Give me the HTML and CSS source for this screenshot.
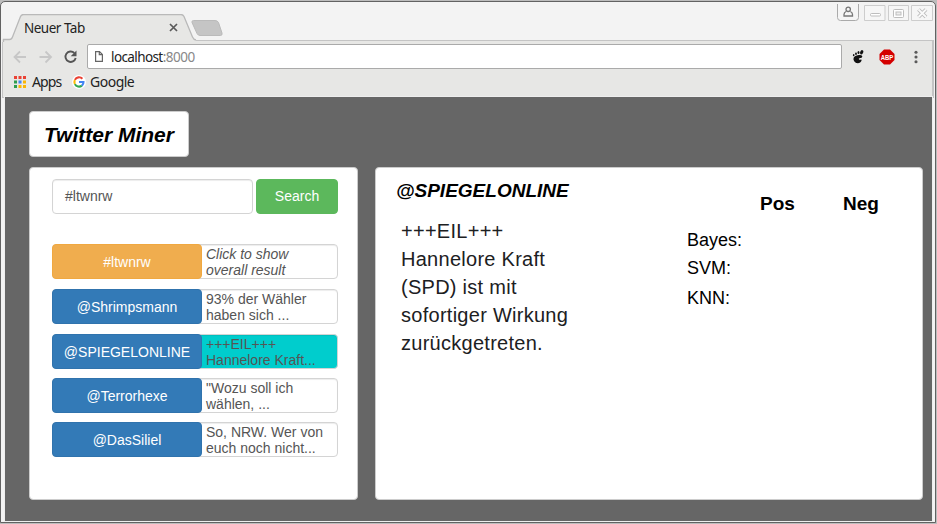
FILE: index.html
```html
<!DOCTYPE html>
<html lang="de">
<head>
<meta charset="utf-8">
<title>Twitter Miner</title>
<link rel="stylesheet" href="styles.css">
</head>
<body>
<div class="window">
  <header class="tabstrip">
    <svg class="tab-shape" width="240" height="28" viewBox="0 0 240 28">
      <path d="M0 28V25.500H7.500C9.500 25.500 10 24.500 10.500 23L18.500 2.500Q19.500 .5 21.500 .5H179Q181 .5 182 2.500L190.500 23Q191.500 25.500 194 25.500V28Z" fill="#e7e7e5"/>
      <path d="M1.500 28V25.500H7.500C9.500 25.500 10 24.500 10.500 23L18.500 2.500Q19.500 .5 21.500 .5H179Q181 .5 182 2.500L190.500 23Q191.500 25.500 194 26" fill="none" stroke="#b9b9b9" stroke-width="1.300"/>
      <path d="M191.500 6.500H213Q215.500 6.500 216.500 8.500L220 19Q220.500 21.500 218.500 21.500H198Q196 21.500 195 19.500L190 8.500Q189.500 6.500 191.500 6.500Z" fill="#c5c5c5" stroke="#bababa"/>
    </svg>
    <div class="tab">
      <span class="tab-title">Neuer Tab</span>
      <svg width="9" height="9" viewBox="0 0 9 9"><path d="M1 1l7 7M8 1L1 8" stroke="#5a5a5a" stroke-width="1.700"/></svg>
    </div>
    <div class="controls">
      <svg width="96" height="18" viewBox="0 0 96 18">
        <path d="M.5 0V13.500Q.5 16.500 3.500 16.500H18.500Q21.500 16.500 21.500 13.500V0" fill="#f5f5f5" stroke="#aaa"/>
        <circle cx="11.200" cy="5.300" r="2.200" fill="none" stroke="#777" stroke-width="1.300"/>
        <path d="M9 7.500Q7 8.500 7 10.500V12H15.500V10.500Q15.500 8.500 13.400 7.500" fill="none" stroke="#777" stroke-width="1.300"/>
        <path d="M27.500 1.500h20.500v15h-20.500zM51.500 1.500h20v15h-20zM74.500 1.500h21v15h-21z" fill="#f6f6f6" stroke="#cdcdcd"/>
        <rect x="33.500" y="9.500" width="10" height="2.500" rx="1" fill="#fff" stroke="#bdbdbd"/>
        <rect x="56.500" y="5.500" width="10" height="8" rx="1" fill="#fff" stroke="#bdbdbd"/>
        <rect x="59" y="8" width="5" height="3" fill="#eee" stroke="#bdbdbd"/>
        <path d="M81.500 5.500l7.500 7.500M89 5.500l-7.500 7.500" stroke="#bbb" stroke-width="3.800"/>
        <path d="M81.500 5.500l7.500 7.500M89 5.500l-7.500 7.500" stroke="#fafafa" stroke-width="1.800"/>
      </svg>
    </div>
  </header>
  <div class="chrome">
    <div class="toolbar">
      <svg class="nav" width="68" height="16" viewBox="0 0 68 16">
        <g fill="none" stroke="#c7c7c7" stroke-width="1.800">
          <path d="M13 8H1.500M7 2.500L1.500 8 7 13.500"/>
          <path d="M26.500 8H38M32.500 2.500L38 8 32.500 13.500"/>
        </g>
        <path d="M61.300 4A5.200 5.200 0 1 0 62.700 9" fill="none" stroke="#555" stroke-width="1.900"/>
        <path d="M63.500 1.500V7.200H57.700Z" fill="#555"/>
      </svg>
      <div class="address">
        <svg width="8" height="11" viewBox="0 0 8 11"><path d="M.6.6H4.500L7.400 3.500V10.400H.6ZM4.300.6V3.700H7.400" fill="none" stroke="#666" stroke-width="1.200"/></svg>
        <span>localhost<span class="port">:8000</span></span>
      </div>
      <svg class="foot" width="12" height="14" viewBox="0 0 12 14">
        <path d="M5.500 5.300C9.500 4.200 10.500 5.500 10.200 7 9.800 8.300 7.300 7.500 6.800 8.800 6.600 9.800 7.900 10 8.800 9.500 10.300 9.200 9.600 11.500 8.100 12.600 5.500 14.200 2 12.600 1.500 9.500 1.200 7 3 5.800 5.500 5.300Z" fill="#111"/>
        <ellipse cx="9.700" cy="2.300" rx="1.500" ry="2.300" transform="rotate(20 9.700 2.300)" fill="#111"/>
        <ellipse cx="6.500" cy="2.600" rx="1" ry="1.500" fill="#111"/><ellipse cx="4" cy="3.700" rx=".9" ry="1.300" fill="#111"/><ellipse cx="1.700" cy="5.200" rx=".8" ry="1.100" fill="#111"/>
      </svg>
      <svg class="abp" width="16" height="16" viewBox="0 0 16 16">
        <path d="M5 .5H11L15.500 5V11L11 15.500H5L.5 11V5Z" fill="#d40000"/>
        <text x="8" y="10.500" text-anchor="middle" textLength="12.500" lengthAdjust="spacingAndGlyphs">ABP</text>
      </svg>
      <svg class="menu" width="4" height="14" viewBox="0 0 4 14"><g fill="#5a5a5a"><circle cx="2" cy="2.200" r="1.550"/><circle cx="2" cy="7" r="1.550"/><circle cx="2" cy="11.700" r="1.550"/></g></svg>
    </div>
    <nav class="bookmarks">
      <svg width="12" height="12" viewBox="0 0 12 12">
        <path d="M0 0h3v3H0zM4.500 0h3v3h-3zM9 0h3v3H9z" fill="#ea4335"/>
        <path d="M0 4.500h3v3H0zM0 9h3v3H0z" fill="#2e9e50"/><path d="M4.500 4.500h3v3h-3z" fill="#4285f4"/><path d="M4.500 9h3v3h-3zM9 4.500h3v3H9zM9 9h3v3H9z" fill="#fbb605"/>
      </svg>
      <span class="apps">Apps</span>
      <svg class="google" width="14" height="14" viewBox="0 0 14 14">
        <circle cx="7" cy="7" r="7" fill="#fff"/>
        <g fill="none" stroke-width="2.100"><path d="M10.400 3.800A4.600 4.600 0 0 0 2.900 4.900" stroke="#ea4335"/><path d="M2.900 4.900A4.600 4.600 0 0 0 2.900 9.100" stroke="#fbbc05"/><path d="M2.900 9.100A4.600 4.600 0 0 0 9.900 10.600" stroke="#34a853"/><path d="M9.900 10.600Q11.600 9.100 11.500 7H7" stroke="#4285f4"/></g>
      </svg>
      <span class="google-label">Google</span>
    </nav>
  </div>
  <main class="page">
    <h1 class="panel brand">Twitter Miner</h1>
    <div class="columns">
      <section class="panel sidebar">
        <div class="search"><div class="query">#ltwnrw</div><div class="btn">Search</div></div>
        <div class="list">
          <div class="item overall"><div class="user">#ltwnrw</div><div class="text">Click to show<br>overall result</div></div>
          <div class="item"><div class="user">@Shrimpsmann</div><div class="text">93% der Wähler<br>haben sich ...</div></div>
          <div class="item active"><div class="user">@SPIEGELONLINE</div><div class="text">+++EIL+++<br>Hannelore Kraft...</div></div>
          <div class="item"><div class="user">@Terrorhexe</div><div class="text">"Wozu soll ich<br>wählen, ...</div></div>
          <div class="item"><div class="user">@DasSiliel</div><div class="text">So, NRW. Wer von<br>euch noch nicht...</div></div>
        </div>
      </section>
      <section class="panel detail">
        <article>
          <h2>@SPIEGELONLINE</h2>
          <p>+++EIL+++<br>Hannelore Kraft<br>(SPD) ist mit<br>sofortiger Wirkung<br>zurückgetreten.</p>
        </article>
        <div class="scores">
          <span></span><b>Pos</b><b>Neg</b>
          <span class="label">Bayes:</span>
          <span class="label">SVM:</span>
          <span class="label">KNN:</span>
        </div>
      </section>
    </div>
  </main>
</div>
</body>
</html>
```
FILE: styles.css
```css
* { box-sizing: border-box; }

body {
  margin: 0;
  height: 524px;
  overflow: hidden;
  padding-top: 1px;
  background: #bdbdbd;
  font-family: "Liberation Sans", Arial, sans-serif;
}

.window {
  width: 936px;
  height: 522px;
  display: flex;
  flex-direction: column;
  border: 1px solid #626262;
  border-radius: 5px 5px 0 0;
  background: #f3f3f3;
  overflow: hidden;
}

.tabstrip {
  position: relative;
  flex: 0 0 37px;
  display: flex;
  justify-content: space-between;
}

.tab-shape { position: absolute; left: 1px; top: 12px; }

.tab {
  position: relative;
  width: 177px;
  height: 26px;
  margin: 12px 0 0 23px;
  display: flex;
  align-items: center;
  gap: 85px;
  font: 13.5px "Noto Sans", sans-serif;
  letter-spacing: -.5px;
  color: #222;
}

.tab-title { width: 60px; white-space: nowrap; margin-top: 1px; }
.controls { margin: 2px 2px 0 0; }
.controls svg { display: block; }

.chrome {
  flex: 0 0 58px;
  margin: 0 1px;
  background: #e7e7e5;
  border: solid #c4c4c4;
  border-width: 1px 2px 1px 1px;
  font-family: "Noto Sans", sans-serif;
  color: #222;
}

.toolbar { display: flex; align-items: center; height: 33px; margin-top: -1px; }
.nav { margin-left: 10px; }

.address {
  width: 755px;
  height: 25px;
  margin-left: 6px;
  padding: 0 7px;
  display: flex;
  align-items: center;
  gap: 8px;
  background: #fff;
  border: 1px solid #aaa;
  border-radius: 2px;
  font-size: 13.5px;
  letter-spacing: -.6px;
}

.port { color: #888; letter-spacing: -.5px; }
.foot { margin-left: 10px; }
.abp { margin-left: 15px; overflow: visible; }
.abp text { font: bold 7px "Liberation Sans", sans-serif; fill: #fff; }
.menu { margin-left: 19px; }

.bookmarks {
  display: flex;
  align-items: center;
  height: 19px;
  padding-left: 11px;
  font-size: 14px;
  letter-spacing: -.6px;
}

.bookmarks svg, .bookmarks span { margin-top: -2px; }
.bookmarks .apps { width: 28px; margin-left: 6px; letter-spacing: -.9px; }
.bookmarks .google { margin-left: 12px; }
.bookmarks .google-label { margin-left: 4px; letter-spacing: -.5px; }

.page {
  flex: 1;
  margin: -1px 3px 1px 4px;
  padding: 14px 9px 0 24px;
  background: #666;
  box-shadow: 0 0 0 1px #eee;
}

.panel {
  background: #fff;
  border: 1px solid #ccc;
  border-radius: 4px;
}

.brand {
  width: 160px;
  height: 46px;
  margin: 0 0 10px;
  padding-left: 14px;
  font-size: 21px;
  line-height: 45px;
  font-style: italic;
  white-space: nowrap;
}

.columns { display: flex; gap: 17px; }
.sidebar { width: 329px; height: 333px; padding: 11px 19px 0 22px; }
.search { display: flex; gap: 3px; font-size: 14px; line-height: 33px; }

.query {
  width: 201px;
  height: 35px;
  padding-left: 12px;
  border: 1px solid #d4d4d4;
  border-radius: 4px;
  box-shadow: inset 0 1px 1px rgba(0, 0, 0, .075);
  color: #555;
}

.btn {
  width: 82px;
  height: 35px;
  border: 1px solid #5cb85c;
  border-radius: 4px;
  background: #5cb85c;
  color: #fff;
  text-align: center;
}

.list {
  display: grid;
  grid-template-rows: 45px 45px 44px 44px 35px;
  margin-top: 30px;
  font-size: 14px;
}

.item {
  display: flex;
  width: 286px;
  height: 35px;
  border: 1px solid #d4d4d4;
  border-radius: 4px;
  box-shadow: inset 0 1px 1px rgba(0, 0, 0, .075);
}

.user {
  width: 150px;
  height: 35px;
  margin: -1px 0 0 -1px;
  border: 1px solid #3073ad;
  border-radius: 4px;
  background: #337ab7;
  color: #fff;
  text-align: center;
  line-height: 35px;
}

.overall .user { background: #f0ad4e; border-color: #f0a840; }
.overall .text { font-style: italic; }
.active { background: #00cdcd; }

.text {
  padding: 1px 0 0 4px;
  line-height: 16px;
  color: #555;
  white-space: nowrap;
}

.detail { width: 548px; height: 333px; display: flex; padding-left: 20px; }
article { width: 291px; }
h2 { margin: 12px 0 0; font-size: 19px; line-height: 22px; font-style: italic; }

p {
  margin: 15px 0 0 5px;
  font-size: 20px;
  line-height: 28px;
  letter-spacing: .27px;
  color: #1c2022;
}

.scores {
  display: grid;
  grid-template-columns: 73px 83px 50px;
  grid-template-rows: 36px 28px 30px 29px;
  align-content: start;
  padding-top: 18px;
  font-size: 18px;
  line-height: 36px;
}

.scores b { font-size: 19px; }
.label { grid-column: 1; }
```
